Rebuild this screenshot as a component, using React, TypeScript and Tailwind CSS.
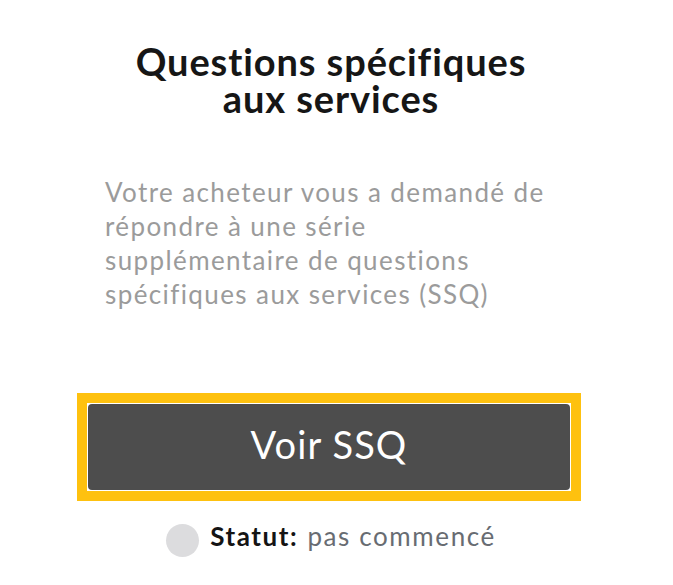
import React from "react";

export default function App() {
  return (
    <div
      className="w-[673px] h-[585px] bg-white flex flex-col items-center pr-[11px]"
      style={{ fontFamily: "Lato, 'Open Sans', sans-serif" }}
    >
      <h1 className="mt-[43px] text-center text-[38px] leading-[37px] font-bold tracking-[0.9px] text-[#161616] whitespace-nowrap">
        Questions spécifiques
        <br />
        aux services
      </h1>
      <p className="mt-[58px] w-[452px] text-left text-[26px] leading-[34px] tracking-[1.4px] text-[#9b9b9b] whitespace-nowrap">
        Votre acheteur vous a demandé de
        <br />
        répondre à une série
        <br />
        supplémentaire de questions
        <br />
        spécifiques aux services (SSQ)
      </p>
      <div className="mt-[82px] ml-[-4px] border-[10px] border-[#fec10f] bg-white p-px">
        <button className="w-[482px] h-[86px] rounded-[4px] bg-[#4d4d4d] text-white text-[38px] tracking-[1.1px] flex items-center justify-center pb-[6px]">
          Voir SSQ
        </button>
      </div>
      <div className="mt-[23px] flex items-start">
        <span className="w-[33px] h-[33px] rounded-full bg-[#dcdcde]" />
        <span className="ml-[11px] text-[26px] leading-[24px] font-bold tracking-[1.6px] text-[#141414]">
          Statut:
        </span>
        <span className="ml-[9px] text-[26px] leading-[24px] tracking-[1.6px] text-[#686c72]">
          pas commencé
        </span>
      </div>
    </div>
  );
}
